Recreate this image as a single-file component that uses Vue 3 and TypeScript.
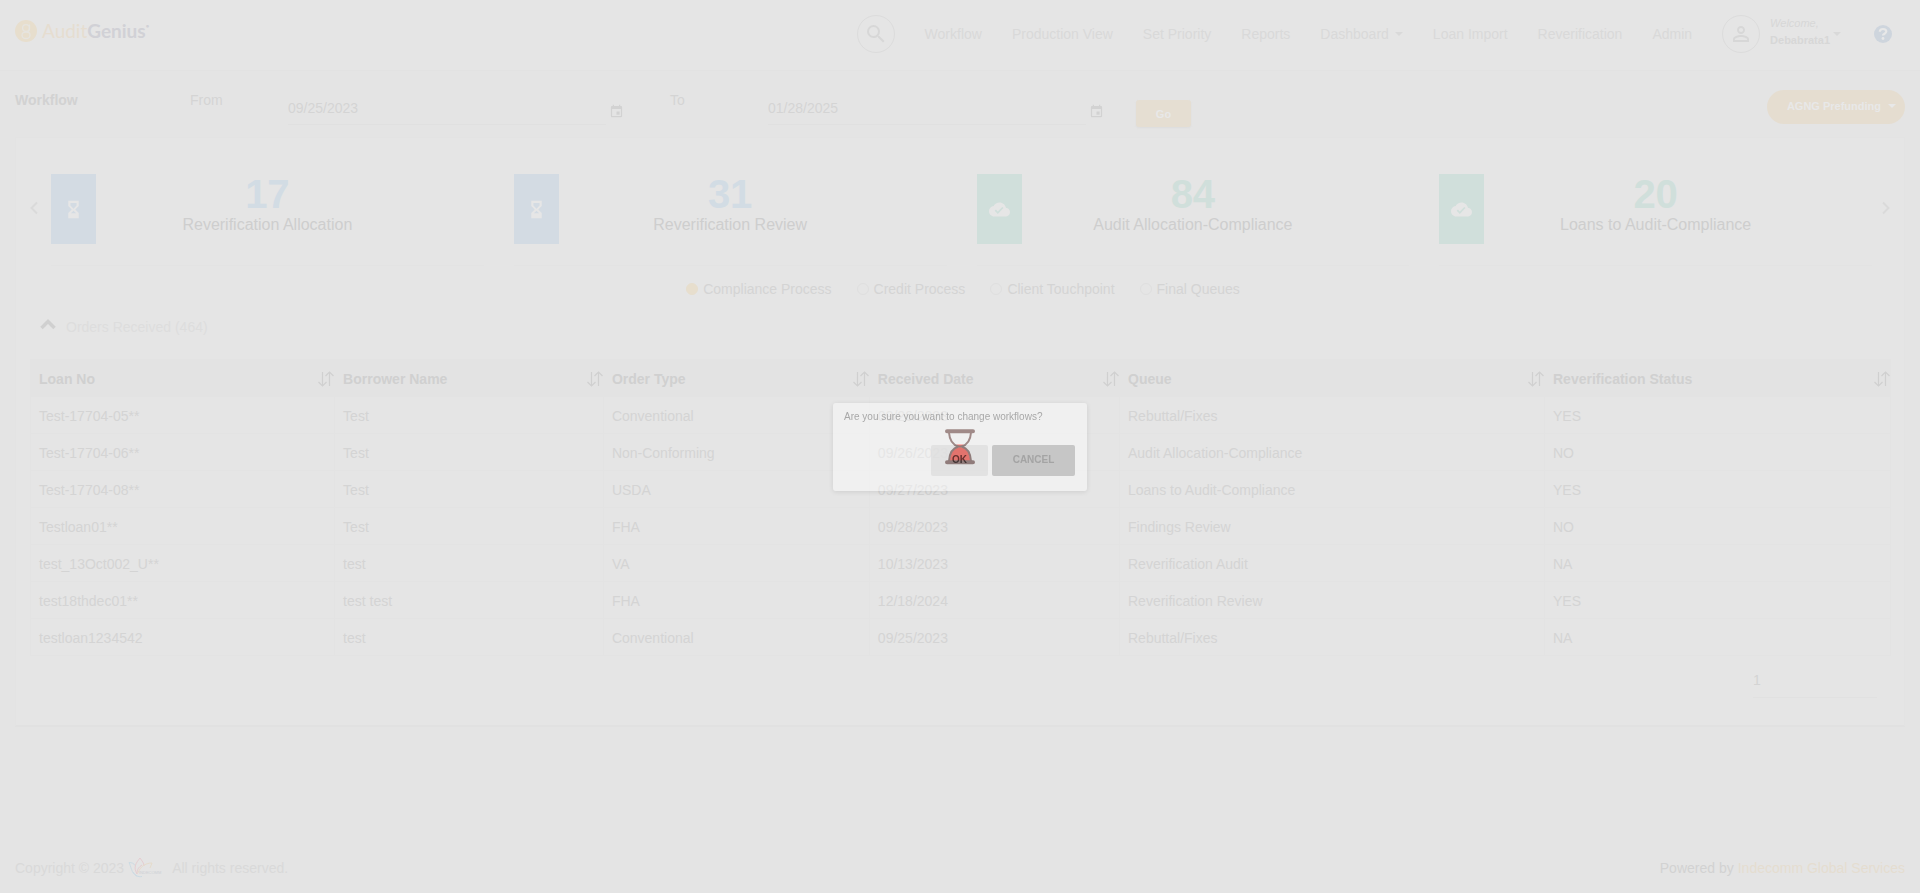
<script setup lang="ts">
import { ref } from 'vue'

interface Card { count: number; label: string; kind: 'hourglass' | 'cloud' }
interface Column { label: string; cls: string }

const cards: Card[] = [
  { count: 17, label: 'Reverification Allocation', kind: 'hourglass' },
  { count: 31, label: 'Reverification Review', kind: 'hourglass' },
  { count: 84, label: 'Audit Allocation-Compliance', kind: 'cloud' },
  { count: 20, label: 'Loans to Audit-Compliance', kind: 'cloud' },
]

const navBefore = ['Workflow', 'Production View', 'Set Priority', 'Reports']
const navAfter = ['Loan Import', 'Reverification', 'Admin']
const processes = ['Compliance Process', 'Credit Process', 'Client Touchpoint', 'Final Queues']

const columns: Column[] = [
  { label: 'Loan No', cls: 'c-loan' },
  { label: 'Borrower Name', cls: 'c-name' },
  { label: 'Order Type', cls: 'c-type' },
  { label: 'Received Date', cls: 'c-date' },
  { label: 'Queue', cls: 'c-queue' },
  { label: 'Reverification Status', cls: 'c-status' },
]

const rows: string[][] = [
  ['Test-17704-05**', 'Test', 'Conventional', '09/26/2023', 'Rebuttal/Fixes', 'YES'],
  ['Test-17704-06**', 'Test', 'Non-Conforming', '09/26/2023', 'Audit Allocation-Compliance', 'NO'],
  ['Test-17704-08**', 'Test', 'USDA', '09/27/2023', 'Loans to Audit-Compliance', 'YES'],
  ['Testloan01**', 'Test', 'FHA', '09/28/2023', 'Findings Review', 'NO'],
  ['test_13Oct002_U**', 'test', 'VA', '10/13/2023', 'Reverification Audit', 'NA'],
  ['test18thdec01**', 'test test', 'FHA', '12/18/2024', 'Reverification Review', 'YES'],
  ['testloan1234542', 'test', 'Conventional', '09/25/2023', 'Rebuttal/Fixes', 'NA'],
]

const fromDate = ref('09/25/2023')
const toDate = ref('01/28/2025')
const process = ref('Compliance Process')
const page = ref('1')
</script>

<template>
  <div class="page">
    <header class="topbar">
      <a class="brand" href="#">
        <svg class="brand-mark" viewBox="0 0 22 22" aria-hidden="true">
          <circle cx="11" cy="11" r="11" fill="#e7decd" />
          <g fill="none" stroke="#e6e4df" stroke-width="1.3">
            <circle cx="11" cy="8" r="3.4" />
            <path d="M14.500 4.500v4c0 2.500-1.500 3.500-3.500 3.500-2.500 0-4 1-4 3s1.600 3.500 4 3.500 4-1.500 4-3.500-1.500-3-4-3" />
          </g>
        </svg>
        <span class="brand-name"><span class="brand-a">Audit</span>Genius<span class="brand-dot">•</span></span>
      </a>
      <nav class="nav">
        <button class="round" type="button" aria-label="Search">
          <svg viewBox="0 0 24 24"><path d="M15.500 14h-.79l-.28-.27A6.470 6.470 0 0 0 16 9.500 6.500 6.500 0 1 0 9.500 16c1.610 0 3.090-.59 4.230-1.570l.27.28v.79l5 4.990L20.490 19l-4.990-5zm-6 0C7.010 14 5 11.990 5 9.500S7.010 5 9.500 5 14 7.010 14 9.500 11.990 14 9.500 14z" /></svg>
        </button>
        <a v-for="n in navBefore" :key="n" href="#">{{ n }}</a>
        <a class="with-caret" href="#">Dashboard<i class="caret"></i></a>
        <a v-for="n in navAfter" :key="n" href="#">{{ n }}</a>
        <div class="user">
          <button class="round" type="button" aria-label="Account">
            <svg viewBox="0 0 24 24"><path d="M12 5.900a2.100 2.100 0 1 1 0 4.200 2.100 2.100 0 0 1 0-4.200m0 9c2.970 0 6.100 1.460 6.100 2.100v1.100H5.900V17c0-.64 3.130-2.100 6.100-2.100M12 4C9.790 4 8 5.790 8 8s1.790 4 4 4 4-1.790 4-4-1.790-4-4-4zm0 9c-2.670 0-8 1.340-8 4v3h16v-3c0-2.660-5.330-4-8-4z" /></svg>
          </button>
          <div class="who"><em>Welcome,</em><strong>Debabrata1</strong></div>
          <i class="caret"></i>
          <a class="help" href="#" aria-label="Help">
            <svg viewBox="0 0 18 18">
              <circle cx="9" cy="9" r="9" fill="#ced5dd" />
              <path d="M5.800 6.800C5.800 4.900 7.200 4 9 4s3.300 1 3.300 2.600C12.300 8.700 9 8.700 9 10.600" fill="none" stroke="#e8e8e8" stroke-width="2.200" />
              <circle cx="9" cy="13.500" r="1.400" fill="#e8e8e8" />
            </svg>
          </a>
        </div>
      </nav>
    </header>

    <main class="main">
      <form class="filters" @submit.prevent>
        <h1>Workflow</h1>
        <label for="from">From</label>
        <input id="from" v-model="fromDate" type="text" />
        <button class="cal" type="button" aria-label="Pick start date">
          <svg viewBox="0 0 24 24"><path d="M17 12h-5v5h5v-5zM16 1v2H8V1H6v2H5a2 2 0 0 0-2 2v14c0 1.100.89 2 2 2h14a2 2 0 0 0 2-2V5a2 2 0 0 0-2-2h-1V1h-2zm3 18H5V8h14v11z" /></svg>
        </button>
        <label for="to">To</label>
        <input id="to" v-model="toDate" type="text" />
        <button class="cal" type="button" aria-label="Pick end date">
          <svg viewBox="0 0 24 24"><path d="M17 12h-5v5h5v-5zM16 1v2H8V1H6v2H5a2 2 0 0 0-2 2v14c0 1.100.89 2 2 2h14a2 2 0 0 0 2-2V5a2 2 0 0 0-2-2h-1V1h-2zm3 18H5V8h14v11z" /></svg>
        </button>
        <div class="actions">
          <button class="go" type="submit">Go</button>
          <button class="pill" type="button">AGNG Prefunding<i class="caret"></i></button>
        </div>
      </form>

      <section class="panel">
        <div class="slider">
          <button class="arrow" type="button" aria-label="Previous">
            <svg viewBox="0 0 10 14"><path d="M8 1.500 2.500 7 8 12.500" /></svg>
          </button>
          <div class="cards">
            <article v-for="c in cards" :key="c.label" class="card" :class="c.kind">
              <div class="tile">
                <svg v-if="c.kind === 'hourglass'" viewBox="0 0 24 24"><path fill-rule="evenodd" d="M18 22v-6l-4-4 4-4V2H6v6l4 4-4 4v6h12zM8.500 7.500V4.500h7v3L12 11 8.500 7.500zM9 16.300 12 13.300l3 3z" /></svg>
                <svg v-else viewBox="0 0 24 24"><path d="M19.350 10.040C18.670 6.590 15.640 4 12 4 9.110 4 6.600 5.640 5.350 8.040 2.340 8.360 0 10.910 0 14c0 3.310 2.690 6 6 6h13c2.760 0 5-2.240 5-5 0-2.640-2.050-4.780-4.650-4.960zM10 17l-3.500-3.500 1.410-1.410L10 14.170 15.180 9l1.410 1.410L10 17z" /></svg>
              </div>
              <p class="count">{{ c.count }}</p>
              <p class="label">{{ c.label }}</p>
            </article>
          </div>
          <button class="arrow" type="button" aria-label="Next">
            <svg viewBox="0 0 10 14"><path d="M2 1.500 7.500 7 2 12.500" /></svg>
          </button>
        </div>

        <div class="radios" role="radiogroup" aria-label="Process">
          <label v-for="p in processes" :key="p">
            <input v-model="process" type="radio" name="process" :value="p" />{{ p }}
          </label>
        </div>

        <button class="fold" type="button">
          <svg viewBox="0 0 16 11"><path d="M1.500 9 8 2.500 14.500 9" /></svg>
          <span>Orders Received (464)</span>
        </button>

        <table>
          <thead>
            <tr>
              <th v-for="c in columns" :key="c.label" :class="c.cls" scope="col">
                <span class="th">{{ c.label }}
                  <svg viewBox="0 0 16 16"><path d="M4.500 1v14M.5 11l4 4 4-4M11.500 15V1M7.500 5l4-4 4 4" /></svg>
                </span>
              </th>
            </tr>
          </thead>
          <tbody>
            <tr v-for="r in rows" :key="r[0]">
              <td v-for="(v, i) in r" :key="i">{{ v }}</td>
            </tr>
          </tbody>
        </table>

        <div class="pager">
          <select v-model="page" aria-label="Page"><option>1</option></select>
        </div>
      </section>
    </main>

    <footer class="footer">
      <p>
        Copyright © 2023
        <svg viewBox="0 0 40 21" aria-label="Indecomm">
          <g fill="none" stroke-width="1">
            <path d="M9 19C3 16 3 9 1 5.500c3 0 5 1 6 3M5 15c2 4 5 5 9 4.500" stroke="#ccdbe3" />
            <path d="M9 17C5 10 8 6 12 1c2 3 4 5 4 8M9 17c0-5 2-7 5-9" stroke="#e5cdd0" />
            <path d="M10 16c2-6 7-10 14-10-1 2-1 3-2 5" stroke="#e6dccb" />
          </g>
          <text x="11" y="17" font-size="4" fill="#cdd0d5">INDECOMM</text>
        </svg>
        All rights reserved.
      </p>
      <p class="powered">Powered by <a href="#">Indecomm Global Services</a></p>
    </footer>

    <div class="overlay">
      <div class="dialog" role="dialog" aria-modal="true" aria-labelledby="question">
        <p id="question">Are you sure you want to change workflows?</p>
        <div class="buttons">
          <button class="ok" type="button">OK</button>
          <button class="cancel" type="button">CANCEL</button>
        </div>
      </div>
      <svg class="spinner" viewBox="0 0 30 36" aria-hidden="true">
        <path d="M4.500 32C5 24 8 19.500 14 18h2c6 1.500 9 6 9.500 14z" fill="#fb7f79" />
        <path d="M11.500 15.500h7L16 18h-2z" fill="#fb7f79" />
        <path d="M4 3.500C4.500 11 8 16 13.500 17.500 8 19 4.500 24 4 32M26 3.500C25.500 11 22 16 16.500 17.500 22 19 25.500 24 26 32" fill="none" stroke="#a08a88" stroke-width="2" />
        <path d="M2 2.300h26M2 33.300h26" stroke="#a08a88" stroke-width="4" stroke-linecap="round" />
      </svg>
    </div>
  </div>
</template>

<style>
body {
  margin: 0;
  background: #e4e4e4;
}
</style>

<style scoped>
.page {
  display: flex;
  flex-direction: column;
  min-height: 100vh;
  background: #e4e4e4;
  color: #d4d4d4;
  font: 14px/20px "Liberation Sans", Arial, sans-serif;
}
.page * { box-sizing: border-box; }
h1, p { margin: 0; }
a { color: inherit; text-decoration: none; }
button, input, select {
  font: inherit;
  color: inherit;
  border: 0;
  padding: 0;
  background: none;
}
.caret {
  border: 4px solid transparent;
  border-top-color: currentColor;
  border-bottom: 0;
}

.topbar {
  display: flex;
  align-items: center;
  justify-content: space-between;
  height: 71px;
  padding: 0 28px 3px 15px;
  background: #e5e5e5;
  border-bottom: 1px solid #e2e2e2;
}
.brand {
  display: flex;
  align-items: center;
  gap: 5px;
  padding-bottom: 6px;
}
.brand-mark { width: 22px; height: 22px; }
.brand-name {
  display: flex;
  font: 700 19px/22px Lato, sans-serif;
  color: #d1d1d6;
}
.brand-a { color: #e6ddd0; font-weight: 400; }
.brand-dot { font-size: 6px; line-height: 12px; }
.nav {
  display: flex;
  align-items: center;
  gap: 30px;
  color: #d9d9d9;
}
.with-caret { display: flex; align-items: center; gap: 6px; }
.round {
  display: grid;
  place-items: center;
  width: 38px;
  height: 38px;
  border: 1px solid #dcdcdc;
  border-radius: 50%;
}
.round svg { width: 24px; height: 24px; fill: #d7d7d7; }
.user { display: flex; align-items: center; }
.who {
  display: flex;
  flex-direction: column;
  margin: 0 3px 4px 10px;
  font-size: 11px;
  line-height: 17px;
  color: #d7d7d7;
}
.help { display: flex; margin-left: 33px; }
.help svg { width: 18px; height: 18px; }

.main { flex: 1; padding: 0 15px; }
.filters {
  display: grid;
  grid-template-columns: 175fr 98fr 318fr 64fr 98fr 318fr 50fr 769fr;
  align-items: start;
  height: 66px;
  padding-top: 19px;
}
.filters h1 { font-size: 14px; line-height: 20px; color: #d2d2d2; }
.filters input {
  width: 100%;
  height: 35px;
  padding-top: 2px;
  border-bottom: 1px solid #e0e0e0;
}
.cal { display: flex; margin: 14px 0 0 3px; width: 15px; }
.cal svg { width: 15px; height: 15px; fill: #d2d2d2; }
.actions {
  display: flex;
  justify-content: space-between;
  align-items: flex-start;
}
.go {
  width: 55px;
  height: 27px;
  margin-top: 10px;
  border-radius: 3px;
  background: #e5ded2;
  color: #e8e8e8;
  font-size: 11px;
  font-weight: 700;
  box-shadow: 0 1px 2px #dcdcdc;
}
.pill {
  display: flex;
  align-items: center;
  gap: 7px;
  height: 34px;
  padding: 0 9px 3px 20px;
  border-radius: 17px;
  background: #e5ddd0;
  color: #e8e8e8;
  font-size: 11px;
  font-weight: 700;
}

.panel {
  height: 590px;
  padding: 36px 13px 0 14px;
  background: #e5e5e5;
  border: 1px solid #e3e3e3;
  border-bottom: 2px solid #e1e1e1;
}
.slider { display: flex; align-items: flex-start; gap: 12px; height: 92px; }
.arrow { display: flex; width: 10px; margin-top: 27px; }
.arrow:first-child { margin-left: -1px; }
.arrow:last-child { margin-left: -3px; }
.arrow svg { width: 10px; height: 14px; }
.arrow path { fill: none; stroke: #dadada; stroke-width: 2; }
.cards {
  flex: 1;
  display: grid;
  grid-template-columns: repeat(4, 1fr);
  gap: 30px;
}
.card {
  position: relative;
  height: 92px;
  border-bottom: 1px solid #e3e3e3;
  text-align: center;
}
.tile {
  position: absolute;
  left: 0;
  top: 0;
  display: grid;
  place-items: center;
  width: 45px;
  height: 70px;
}
.tile svg { width: 21px; height: 21px; fill: #e6e6e6; }
.hourglass .tile { background: #d3dbe3; }
.hourglass .count { color: #d2dce4; }
.cloud .tile { background: #d0dfdb; }
.cloud .count { color: #d0dfdb; }
.count { font-size: 40px; line-height: 40px; font-weight: 700; }
.label { font-size: 16px; line-height: 22px; color: #cecece; }

.radios {
  display: flex;
  justify-content: center;
  gap: 25px;
  margin-top: 13px;
  padding-left: 5px;
}
.radios label { display: flex; align-items: center; gap: 5px; }
.radios input {
  appearance: none;
  width: 12px;
  height: 12px;
  margin: 0;
  border: 1px solid #dfdfdf;
  border-radius: 50%;
}
.radios input:checked { background: #e7decd; border-color: #e7decd; }

.fold {
  display: flex;
  align-items: center;
  gap: 10px;
  margin: 18px 0 0 10px;
  color: #dddddd;
}
.fold svg { width: 16px; height: 11px; margin-bottom: 6px; }
.fold path { fill: none; stroke: #d0d0d0; stroke-width: 3.500; }

table {
  width: 100%;
  margin-top: 22px;
  table-layout: fixed;
  border-collapse: separate;
  border-spacing: 0;
  border-right: 1px solid #e3e3e3;
}
th, td {
  height: 37px;
  padding: 2px 0 0 8px;
  border-left: 1px solid #e3e3e3;
  border-bottom: 1px solid #e3e3e3;
  text-align: left;
}
th { height: 38px; background: #e3e3e3; color: #d0d0d0; }
.th { display: flex; align-items: center; justify-content: space-between; }
.th svg { width: 16px; height: 16px; }
.th path { fill: none; stroke: #d0d0d0; stroke-width: 1.200; }
.c-loan { width: 16.350%; }
.c-name { width: 14.450%; }
.c-type { width: 14.300%; }
.c-date { width: 13.450%; }
.c-queue { width: 22.850%; }
.c-status { width: 18.600%; }

.pager { display: flex; justify-content: flex-end; padding: 10px 14px 0 0; }
.pager select {
  appearance: none;
  width: 124px;
  height: 32px;
  padding-bottom: 3px;
  border-bottom: 1px solid #e1e1e1;
}

.footer {
  display: flex;
  justify-content: space-between;
  padding: 0 15px 15px;
  color: #d9d9d9;
}
.footer p { display: flex; align-items: center; gap: 4px; }
.footer svg { width: 40px; height: 21px; }
.footer .powered { color: #d2d2d2; }
.powered a { color: #e4ddd0; }

.overlay {
  position: fixed;
  inset: 0;
  display: grid;
  place-items: center;
}
.overlay > * { grid-area: 1 / 1; }
.dialog {
  width: 254px;
  height: 88px;
  padding: 4px 12px 0 11px;
  border-radius: 3px;
  background: rgba(255, 255, 255, 0.42);
  box-shadow: 0 1px 5px rgba(0, 0, 0, 0.1);
  color: #a8a8a8;
  font-size: 10px;
}
.buttons {
  display: flex;
  justify-content: flex-end;
  gap: 4px;
  margin-top: 18px;
}
.buttons button {
  height: 31px;
  border-radius: 2px;
  font-size: 10px;
  font-weight: 700;
}
.ok { width: 57px; background: rgba(220, 220, 220, 0.7); }
.buttons .ok { color: #6a6060; }
.cancel { width: 83px; background: #c6c6c6; }
.buttons .cancel { color: #a4a4a4; }
.spinner {
  width: 30px;
  height: 36px;
  mix-blend-mode: multiply;
  pointer-events: none;
}
</style>
